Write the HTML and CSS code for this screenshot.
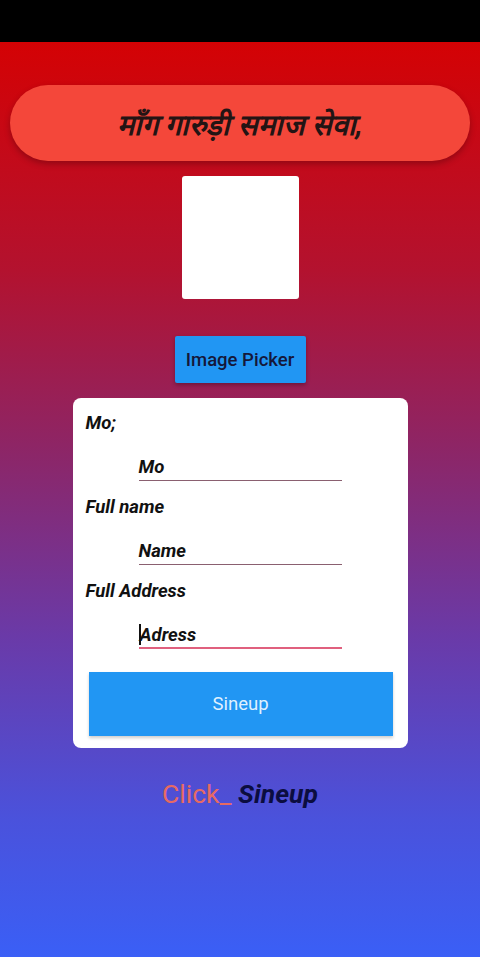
FILE: index.html
```html
<!DOCTYPE html>
<html lang="hi">

<head>
    <meta charset="UTF-8">
    <title>Sineup</title>
    <link rel="stylesheet" href="styles.css">
</head>

<body>
    <div class="statusbar"></div>
    <div class="screen">
        <div class="title">माँग गारुड़ी समाज सेवा,</div>
        <div class="photo"></div>
        <button class="picker">Image Picker</button>
        <form class="card">
            <label class="label">Mo;</label>
            <div class="field"><span>Mo</span></div>
            <label class="label">Full name</label>
            <div class="field"><span>Name</span></div>
            <label class="label">Full Address</label>
            <div class="field focus"><span class="caret"></span><span>Adress</span></div>
            <button type="button" class="submit">Sineup</button>
        </form>
        <div class="link"><span class="click">Click_</span> <span class="bold">Sineup</span></div>
    </div>
</body>

</html>
```

FILE: styles.css
```css
body {
    margin: 0;
    padding: 0;
    font-family: Roboto, 'Liberation Sans', Arial, sans-serif;
    background: #000;
}

.statusbar {
    height: 42px;
    background: #000;
}

.screen {
    height: 915px;
    background: linear-gradient(180deg, #d40204 0%, #b3122f 25%, #8c2668 45%, #6a3aa8 65%, #4a52dc 85%, #3a5ff6 100%);
    display: flex;
    flex-direction: column;
    align-items: center;
}

.title {
    box-sizing: border-box;
    width: 460px;
    height: 76px;
    margin-top: 43px;
    border-radius: 38px;
    background: #f4473a;
    box-shadow: 0 3px 6px rgba(0, 0, 0, 0.25);
    display: flex;
    align-items: center;
    justify-content: center;
    font-size: 29px;
    font-weight: bold;
    font-style: italic;
    color: #231414;
}

.photo {
    width: 117px;
    height: 123px;
    margin-top: 15px;
    background: #fff;
    border-radius: 3px;
}

.picker {
    margin-top: 37px;
    width: 131px;
    height: 47px;
    border: none;
    border-radius: 2px;
    background: #2196f3;
    color: #15183a;
    font-family: Roboto, sans-serif;
    font-size: 18.5px;
    font-weight: 500;
    box-shadow: 0 2px 4px rgba(0, 0, 0, 0.3);
}

.card {
    box-sizing: border-box;
    width: 335px;
    height: 350px;
    margin-top: 15px;
    background: #fff;
    border-radius: 8px;
    padding: 13px 16px 0 13px;
    display: flex;
    flex-direction: column;
}

.label {
    font-size: 18.5px;
    font-weight: bold;
    font-style: italic;
    color: #111;
    height: 24px;
    line-height: 24px;
}

.field {
    margin: 19px 0 14px 53px;
    width: 203px;
    height: 26px;
    border-bottom: 1px solid #8a6070;
    display: flex;
    align-items: center;
    font-size: 18.5px;
    font-weight: bold;
    font-style: italic;
    color: #111;
}

.field.focus {
    border-bottom: 2px solid #e0607e;
    height: 25px;
}

.caret {
    width: 2px;
    height: 21px;
    background: #111;
    margin-right: -1px;
}

.submit {
    margin: 9px 0 0 3px;
    width: 304px;
    height: 64px;
    border: none;
    background: #2196f3;
    color: #dff0ff;
    font-family: Roboto, sans-serif;
    font-size: 18.5px;
    box-shadow: 0 2px 3px rgba(0, 0, 0, 0.2);
}

.link {
    margin-top: 30px;
    font-size: 26.5px;
}

.click {
    color: #e76a62;
}

.bold {
    font-weight: bold;
    font-style: italic;
    color: #0b0d40;
}
```
